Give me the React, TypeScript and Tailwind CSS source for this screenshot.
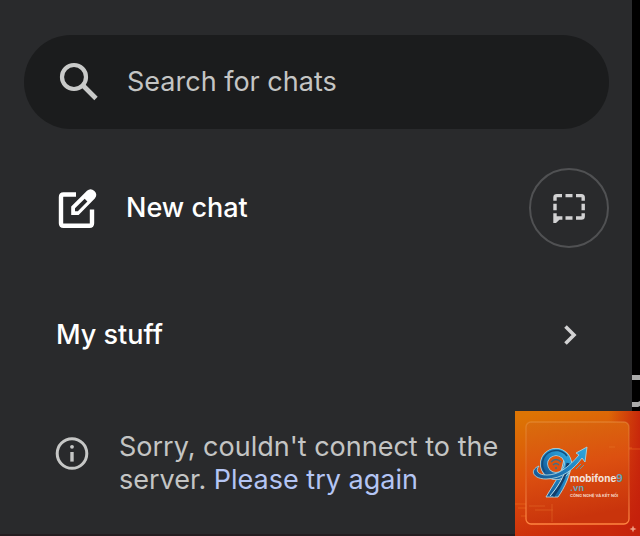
function SearchIcon() {
  return (
    <svg viewBox="0 0 40 40" className="size-10 shrink-0" fill="none" stroke="#c9cac9" aria-hidden="true">
      <circle cx="15" cy="15" r="12" strokeWidth="4.2" />
      <path d="M23.5 23 37 36.5" strokeWidth="4.8" />
    </svg>
  );
}

function NewChatIcon() {
  return (
    <svg viewBox="0 0 42 42" className="size-[42px] shrink-0" fill="none" aria-hidden="true">
      <path
        d="M20 7.5H7.5Q5 7.5 5 10V36.3Q5 38.8 7.5 38.8H33.5Q36 38.8 36 36.3V22.5"
        stroke="#fff"
        strokeWidth="4.4"
      />
      <path
        d="M15.2 19.6 31 3.8Q34.6.6 38.4 4 42 7.6 38.8 11.4L22.6 28H15.2ZM19 21.3V24.2H21.8L31.4 14.4 28.7 11.7Z"
        fill="#fff"
        fillRule="evenodd"
      />
    </svg>
  );
}

function TemporaryChatIcon() {
  return (
    <svg viewBox="0 0 34 30" className="h-[30px] w-[34px]" fill="none" stroke="#d2d2d3" strokeWidth="3.4" aria-hidden="true">
      <path d="M3 7.8V4.4Q3 2.6 4.8 2.6H10M13.5 2.6H20.5M24 2.6H29.4Q31.2 2.6 31.2 4.4V7.8M31.2 10.7V17.3M31.2 20.3V23.2Q31.2 25 29.4 25H24M20.5 25H13.5M3 10.7V17.3" />
      <path d="M1.3 20.2H4.7V23.3H10.4V26.7H7.4L4 30H1.3Z" fill="#d2d2d3" stroke="none" />
    </svg>
  );
}

function ChevronIcon() {
  return (
    <svg viewBox="0 0 14 22" className="h-[22px] w-[14px]" fill="none" stroke="#d2d2d3" strokeWidth="3.6" aria-hidden="true">
      <path d="M2.5 2.5 11 11 2.5 19.5" />
    </svg>
  );
}

function InfoIcon() {
  return (
    <svg viewBox="0 0 34 34" className="size-[34px] shrink-0" fill="none" stroke="#c6c7c6" aria-hidden="true">
      <circle cx="17" cy="16.5" r="14.8" strokeWidth="3" />
      <path d="M17 15V24.6" strokeWidth="3.4" />
      <circle cx="17" cy="9.8" r="1.9" fill="#c6c7c6" stroke="none" />
    </svg>
  );
}

function BrandBadge() {
  return (
    <svg
      viewBox="0 0 125 125"
      className="absolute right-0 bottom-0 size-[125px]"
      role="img"
      aria-label="mobifone9.vn"
      fontFamily="Inter, sans-serif"
    >
      <defs>
        <linearGradient id="back" x1="0.2" y1="0" x2="0.5" y2="1">
          <stop offset="0" stopColor="#dc7404" />
          <stop offset="0.5" stopColor="#dc4f0c" />
          <stop offset="1" stopColor="#c9280b" />
        </linearGradient>
        <linearGradient id="right" x1="0" y1="0" x2="1" y2="0">
          <stop offset="0.75" stopColor="#c41f0b" stopOpacity="0" />
          <stop offset="1" stopColor="#c41f0b" stopOpacity="0.85" />
        </linearGradient>
        <linearGradient id="card" x1="0" y1="0" x2="0.2" y2="1">
          <stop offset="0" stopColor="#d96d0c" />
          <stop offset="0.5" stopColor="#dc5010" />
          <stop offset="1" stopColor="#c9340c" />
        </linearGradient>
        <linearGradient id="edge" x1="0" y1="0" x2="0" y2="1">
          <stop offset="0" stopColor="#f0a860" stopOpacity="0.35" />
          <stop offset="0.5" stopColor="#e8864c" stopOpacity="0.35" />
          <stop offset="1" stopColor="#ff8540" />
        </linearGradient>
        <linearGradient id="blue" x1="0" y1="1" x2="1" y2="0">
          <stop offset="0" stopColor="#13538f" />
          <stop offset="0.5" stopColor="#1f83c2" />
          <stop offset="1" stopColor="#2fa9df" />
        </linearGradient>
      </defs>
      <rect width="125" height="125" fill="url(#back)" />
      <rect width="125" height="125" fill="url(#right)" />
      <path
        d="M0 93H18M3 97H34M24 101H42M6 105H14M36 93V113M96 35H104M105 37H117M112 38H125"
        stroke="#f47a25"
        strokeWidth="0.8"
        opacity="0.6"
      />
      <rect x="11" y="11" width="103" height="102" rx="5" fill="url(#card)" stroke="url(#edge)" strokeWidth="1.3" />
      <path d="M14 95H30M20 99H38M37 93V111M94 36H100" stroke="#f18637" strokeWidth="0.7" opacity="0.5" />

      <path d="M46 61 31 86H43C50 76 55 65 57 51L49 48Z" fill="url(#blue)" stroke="#b9d6dc" strokeWidth="0.9" />
      <circle cx="41" cy="53" r="12" fill="none" stroke="#b9d6dc" strokeWidth="8" />
      <circle cx="41" cy="53" r="12" fill="none" stroke="url(#blue)" strokeWidth="6.4" />
      <path d="M30 61A13 13 0 0 1 52 45" fill="none" stroke="#134c7c" strokeWidth="1.5" />
      <path d="M53 52C51 65 46 74 38 85" fill="none" stroke="#133f6b" strokeWidth="3" />
      <path d="M50 60C47 69 42 77 35 85" fill="none" stroke="#d8f1f5" strokeWidth="0.9" />
      <path d="M24 55C14 59 18 68 31 68 47 68 59 58 67 47L70 51 72 36 61 42 64 44C53 57 43 64 32 64 23 64 20 60 24 55Z" fill="url(#blue)" stroke="#a9d2dd" strokeWidth="0.9" />
      <path d="M36 51Q41 46 46 51M38 54Q41 51 44 54" fill="none" stroke="#3b718a" strokeWidth="1.3" />
      <circle cx="41" cy="57" r="1" fill="#3b718a" />
      <path d="M61 58L66 53M65 58L69 54" stroke="#4fa6bf" strokeWidth="0.9" />

      <text x="55" y="71" fontSize="10" fontWeight="700" fill="#f3e3dc">
        mobifone<tspan fill="#68a4bb">9</tspan>
      </text>
      <text x="55" y="80" fontSize="9" fontWeight="700" fill="#68a4bb">.vn</text>
      <text x="55" y="86" fontSize="4" fontWeight="700" fill="#f6d8c9">CÔNG NGHỆ VÀ KẾT NỐI</text>
      <path d="M118 114.5 119 117 121.5 118 119 119 118 121.5 117 119 114.5 118 117 117Z" fill="#ee9c83" />
    </svg>
  );
}

export default function App() {
  return (
    <div className="relative min-h-screen overflow-hidden bg-black pr-2 font-['Inter',sans-serif]">
      <main className="min-h-screen border-b-2 border-[#241d20] bg-[#292a2c] pt-[35px] pr-[23px] pb-9 pl-6">
        <label className="flex h-[94px] items-center gap-7 rounded-full bg-[#1b1c1d] pl-[35px] pr-8">
          <SearchIcon />
          <input
            type="text"
            aria-label="Search for chats"
            placeholder="Search for chats"
            className="w-full min-w-0 bg-transparent text-[27px] text-[#c4c5c4] outline-none placeholder:text-[#c4c5c4]"
          />
        </label>

        <div className="mt-[39px] flex items-center justify-between">
          <button type="button" className="flex items-center gap-7 pl-8 text-[27px] font-medium text-white">
            <NewChatIcon />
            New chat
          </button>
          <button
            type="button"
            aria-label="Temporary chat"
            className="flex size-20 items-center justify-center rounded-full border-2 border-[#505153]"
          >
            <TemporaryChatIcon />
          </button>
        </div>

        <button
          type="button"
          className="mt-[47px] flex h-20 w-full items-center justify-between pr-8 pl-8 text-[27px] font-medium text-white"
        >
          My stuff
          <ChevronIcon />
        </button>

        <div className="mt-[55px] flex items-start gap-[30px] pl-[31px]">
          <div className="pt-[7px]">
            <InfoIcon />
          </div>
          <p className="w-[390px] text-[27px] leading-[33px] text-[#c4c5c4]">
            Sorry, couldn't connect to the server.{" "}
            <a href="#" className="text-[#b4c5f4]">
              Please try again
            </a>
          </p>
        </div>
      </main>

      <svg viewBox="0 0 8 34" className="absolute top-[374px] right-0 h-[34px] w-2" aria-hidden="true">
        <path d="M0 1H8V6H0ZM0 28H6L8 27V32L6 33H0Z" fill="#aaa" />
      </svg>
      <BrandBadge />
    </div>
  );
}
